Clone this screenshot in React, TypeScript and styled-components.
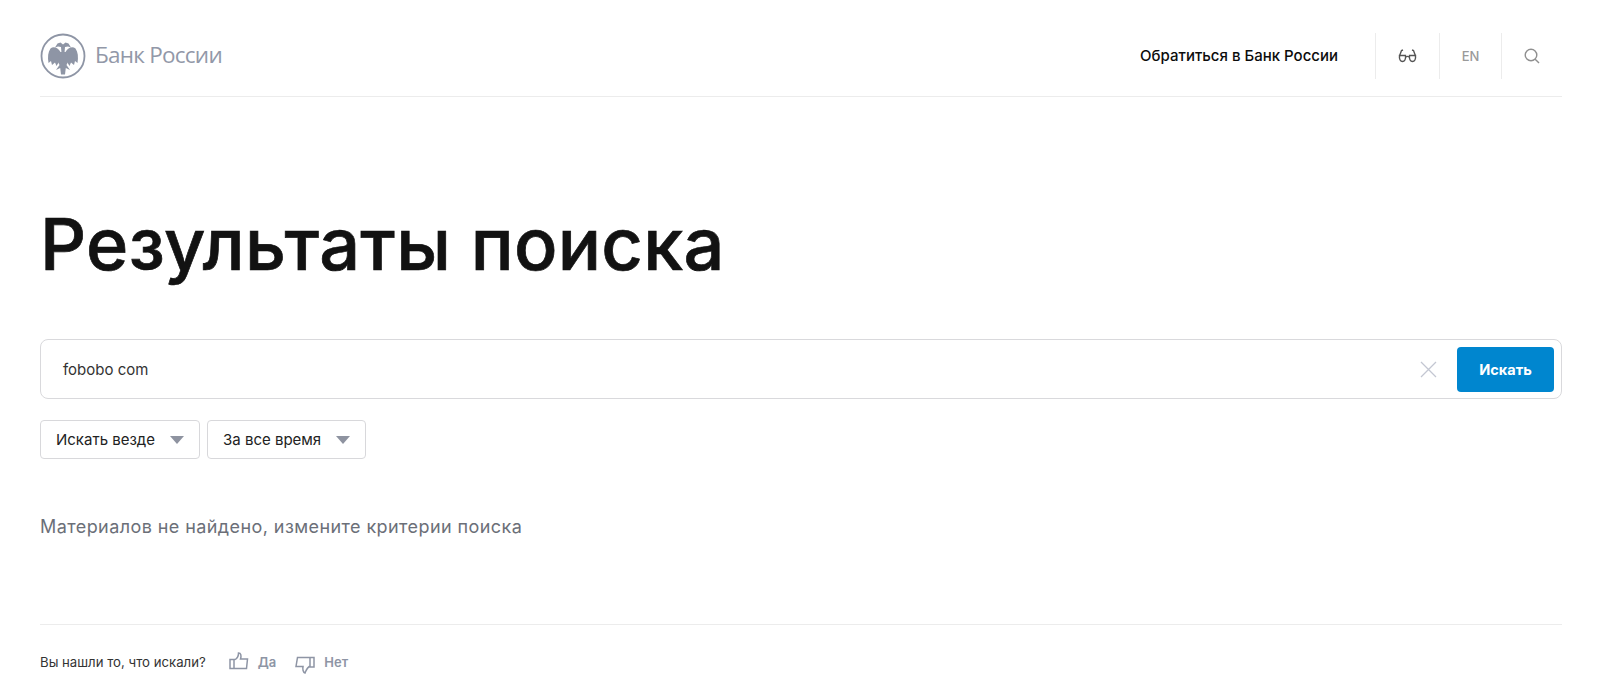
import React from 'react';
import styled, { createGlobalStyle } from 'styled-components';

const GlobalStyle = createGlobalStyle`
  html, body {
    margin: 0;
    padding: 0;
    background: #fff;
    font-family: Inter, "Noto Sans", sans-serif;
  }
`;

const Page = styled.div`
  width: 1522px;
  margin-left: 40px;
  height: 693px;
  overflow: hidden;
`;

const Header = styled.header`
  display: flex;
  align-items: center;
  justify-content: space-between;
  box-sizing: border-box;
  height: 97px;
  padding-top: 15px;
  border-bottom: 1px solid #ececec;
`;

const Logo = styled.div`
  display: flex;
  align-items: center;
  gap: 9px;
`;

const LogoText = styled.span`
  font-family: "Open Sans", sans-serif;
  font-size: 22.5px;
  font-weight: 400;
  color: #9298a8;
  letter-spacing: -0.75px;
  margin-top: -2px;
`;

const Nav = styled.nav`
  display: flex;
  align-items: center;
  height: 46px;
`;

const NavLink = styled.a`
  font-size: 15px;
  font-weight: 500;
  color: #0c0c0c;
  margin-right: 37px;
`;

const NavCell = styled.div<{ $w: number }>`
  display: flex;
  align-items: center;
  justify-content: center;
  width: ${p => p.$w}px;
  height: 46px;
  border-left: 1px solid #ececec;
  color: #8a8a8a;
`;

const Lang = styled.span`
  font-size: 13px;
  font-weight: 500;
  color: #9a9a9a;
`;

const Title = styled.h1`
  margin: 99px 0 0;
  font-size: 72px;
  line-height: 96px;
  font-weight: 500;
  letter-spacing: 0.3px;
  -webkit-text-stroke: 0.7px #121212;
  color: #121212;
`;

const SearchBox = styled.div`
  display: flex;
  align-items: center;
  box-sizing: border-box;
  height: 60px;
  margin-top: 47px;
  padding: 0 7px 0 22px;
  border: 1px solid #d9d9dc;
  border-radius: 8px;
`;

const Query = styled.span`
  flex: 1;
  font-size: 15px;
  color: #333;
`;

const Clear = styled.span`
  display: flex;
  margin-right: 20px;
  color: #c3c7d2;
`;

const SearchButton = styled.button`
  width: 97px;
  height: 45px;
  border: 0;
  border-radius: 4px;
  background: #0086cf;
  color: #fff;
  font-family: inherit;
  font-size: 14.5px;
  font-weight: 700;
`;

const Filters = styled.div`
  display: flex;
  gap: 7px;
  margin-top: 21px;
`;

const Select = styled.div<{ $w: number }>`
  display: flex;
  align-items: center;
  justify-content: space-between;
  box-sizing: border-box;
  width: ${p => p.$w}px;
  height: 39px;
  padding: 0 15px;
  border: 1px solid #d8d8db;
  border-radius: 4px;
  font-size: 15px;
  color: #222;
`;

const Arrow = styled.span`
  width: 0;
  height: 0;
  border-left: 7px solid transparent;
  border-right: 7px solid transparent;
  border-top: 8px solid #8e93a0;
`;

const Empty = styled.p`
  margin: 56px 0 0;
  font-size: 18px;
  line-height: 24px;
  letter-spacing: 0.42px;
  color: #6b6f78;
`;

const Footer = styled.footer`
  display: flex;
  align-items: center;
  height: 74px;
  margin-top: 85px;
  border-top: 1px solid #ececec;
  font-size: 13.2px;
  color: #333;
`;

const Vote = styled.span`
  display: flex;
  align-items: center;
  gap: 9px;
  margin-left: 19px;
  font-size: 13px;
  font-weight: 600;
  color: #8e95a5;
`;

const FootLabel = styled.span`
  margin-right: 4px;
`;

const ThumbSvg = styled.svg<{ $drop?: boolean }>`
  margin-top: ${p => (p.$drop ? '5px' : '-2px')};
  fill: none;
  stroke: #8e95a5;
  stroke-width: 1.5;
`;

const EagleLogo = () => (
  <svg width="46" height="46" viewBox="0 0 46 46">
    <circle cx="23" cy="23" r="21.5" fill="none" stroke="#8e95a5" strokeWidth="1.8" />
    <g fill="#8e95a5">
      <path d="M20.500 19C18 14.500 13.500 13 10.500 15.500 8 19 7.500 24 8.500 30L11 28 12 32 15 29.500 16.500 33 19.500 28Z" />
      <path d="M25.500 19C28 14.500 32.500 13 35.500 15.500 38 19 38.500 24 37.500 30L35 28 34 32 31 29.500 29.500 33 26.500 28Z" />
      <path d="M21.500 20 21 14 18 13.500 15 14.500 17.500 10.500 20.500 9.500 23 11.500 25.500 9.500 28.500 10.500 31 14.500 28 13.500 25 14 24.500 20Z" />
      <path d="M19 19H27L28.500 28 26.500 32 30 37 25.800 35 25 41.500H21L20.200 35 16 37 19.500 32 17.500 28Z" />
    </g>
  </svg>
);

const GlassesIcon = () => (
  <svg width="19" height="14" viewBox="0 0 19 14" fill="none" stroke="#555" strokeWidth="1.400">
    <path d="M1.500 6.500H7.500C8 10.500 6.500 12.500 4.500 12.500 2.500 12.500 1 10.500 1.500 6.500ZM11.500 6.500H17.500C18 10.500 16.500 12.500 14.500 12.500 12.500 12.500 11 10.500 11.500 6.500Z" />
    <path d="M7.800 8c1-.7 2.400-.7 3.400 0M1.500 7 3.500 1.500 5 1M17.500 7 15.500 1.500 14 1" />
  </svg>
);

const SearchIcon = () => (
  <svg width="16" height="16" viewBox="0 0 16 16" fill="none" stroke="#8f8f8f" strokeWidth="1.400">
    <circle cx="7" cy="7" r="5.800" />
    <path d="m11.200 11.200 3.800 3.800" />
  </svg>
);

const CrossIcon = () => (
  <svg width="17" height="17" viewBox="0 0 17 17" fill="none" stroke="currentColor" strokeWidth="1.300">
    <path d="m1 1 15 15M16 1 1 16" />
  </svg>
);

const ThumbUp = () => (
  <ThumbSvg width="20" height="18" viewBox="0 0 20 18">
    <path d="M1 7.500h4V16.500H1zM5 8c3-1 4.500-3.500 4.500-7 2.500 0 3 2.500 2 6h7L17.500 16.500H5" />
  </ThumbSvg>
);

const ThumbDown = () => (
  <ThumbSvg $drop width="20" height="18" viewBox="0 0 20 18">
    <path d="M19 1.500h-4V11h4zM15 1.500H2.500L1 10.500h7C7.500 13 8 16.500 10 17c1.500-3.500 2-5.500 5-7" />
  </ThumbSvg>
);

export default function App() {
  return (
    <Page>
      <GlobalStyle />
      <Header>
        <Logo>
          <EagleLogo />
          <LogoText>Банк России</LogoText>
        </Logo>
        <Nav>
          <NavLink>Обратиться в Банк России</NavLink>
          <NavCell $w={63}><GlassesIcon /></NavCell>
          <NavCell $w={61}><Lang>EN</Lang></NavCell>
          <NavCell $w={60}><SearchIcon /></NavCell>
        </Nav>
      </Header>
      <Title>Результаты поиска</Title>
      <SearchBox>
        <Query>fobobo com</Query>
        <Clear><CrossIcon /></Clear>
        <SearchButton>Искать</SearchButton>
      </SearchBox>
      <Filters>
        <Select $w={160}>Искать везде<Arrow /></Select>
        <Select $w={159}>За все время<Arrow /></Select>
      </Filters>
      <Empty>Материалов не найдено, измените критерии поиска</Empty>
      <Footer>
        <FootLabel>Вы нашли то, что искали?</FootLabel>
        <Vote><ThumbUp />Да</Vote>
        <Vote><ThumbDown />Нет</Vote>
      </Footer>
    </Page>
  );
}
